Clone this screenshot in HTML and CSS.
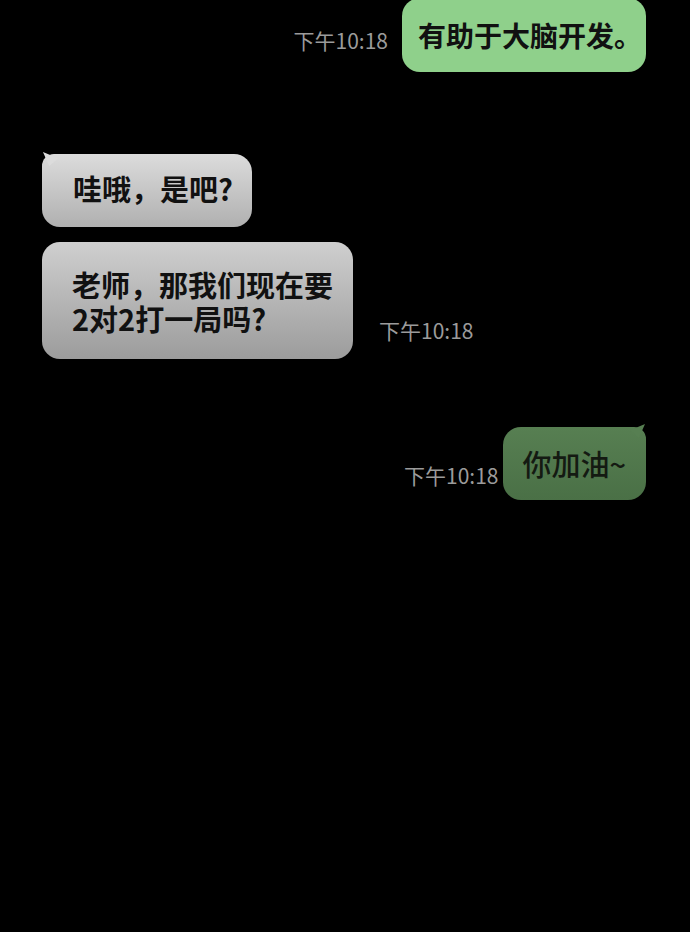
FILE: index.html
```html
<!DOCTYPE html>
<html lang="zh-CN">
<head>
    <meta charset="UTF-8">
    <meta name="viewport" content="width=device-width, initial-scale=1.0">
    <title>聊天</title>
    <link rel="stylesheet" href="styles.css">
</head>
<body>

    <div class="chat">
        <!-- 我发的消息 -->
        <div class="row row-me row-first">
            <span class="time time-first">下午10:18</span>
            <div class="bubble bubble-green">有助于大脑开发。</div>
        </div>

        <!-- 对方的消息 -->
        <div class="row row-other row-second">
            <div class="bubble bubble-gray bubble-short tail-left">哇哦，是吧?</div>
        </div>

        <div class="row row-other row-third">
            <div class="bubble bubble-gray bubble-long">老师，那我们现在要2对2打一局吗?</div>
            <span class="time time-third">下午10:18</span>
        </div>

        <div class="row row-me row-fourth">
            <span class="time time-fourth">下午10:18</span>
            <div class="bubble bubble-dark tail-right">你加油~</div>
        </div>
    </div>

</body>
</html>
```

FILE: styles.css
```css
body {
    font-family: "Noto Sans CJK SC", "Noto Sans", sans-serif;
    background-color: #000;
    margin: 0;
    padding: 0;
    height: 932px;
    overflow: hidden;
}
.chat {
    display: flex;
    flex-direction: column;
    padding: 0 44px 0 42px;
}
.row {
    display: flex;
    align-items: flex-end;
}
.row-me {
    justify-content: flex-end;
}
.row-other {
    justify-content: flex-start;
}
.row-first {
    margin-top: -2px;
}
.row-second {
    margin-top: 82px;
}
.row-third {
    margin-top: 15px;
}
.row-fourth {
    margin-top: 68px;
}
.time {
    font-size: 21px;
    line-height: 24px;
    color: #9b9b9b;
    white-space: nowrap;
}
.time-first {
    margin: 0 14px 20px 0;
}
.time-third {
    margin: 0 0 17px 26px;
}
.time-fourth {
    margin: 0 5px 13px 0;
}
.bubble {
    position: relative;
    font-size: 29px;
    line-height: 34px;
    font-weight: 700;
    color: #111;
    border-radius: 18px;
    box-sizing: border-box;
}
.bubble-green {
    font-size: 28px;
    background-color: #8fd08b;
    padding: 20px 4px 20px 16px;
}
.bubble-gray {
    background: linear-gradient(to bottom, #dadada, #a6a6a6);
}
.bubble-short {
    padding: 17px 19px 22px 31px;
    background: linear-gradient(to bottom, #dcdcdc, #b0b0b0);
}
.bubble-long {
    max-width: 311px;
    padding: 25px 19px 24px 30px;
    background: linear-gradient(to bottom, #cfcfcf, #9c9c9c);
}
.bubble-dark {
    background: linear-gradient(to bottom, #577f52, #4a7046);
    color: #141a12;
    font-weight: 500;
    padding: 19px 20px 20px 19px;
}
/* 气泡的小尾巴 */
.tail-left {
    border-top-left-radius: 12px;
}
.tail-left::before {
    content: "";
    position: absolute;
    top: -2px;
    left: 0;
    width: 16px;
    height: 14px;
    background-color: #dcdcdc;
    clip-path: polygon(6% 0, 100% 45%, 45% 100%);
}
.tail-right {
    border-top-right-radius: 12px;
}
.tail-right::before {
    content: "";
    position: absolute;
    top: -3px;
    right: 0;
    width: 16px;
    height: 14px;
    background-color: #577f52;
    clip-path: polygon(94% 0, 0 45%, 55% 100%);
}
```
